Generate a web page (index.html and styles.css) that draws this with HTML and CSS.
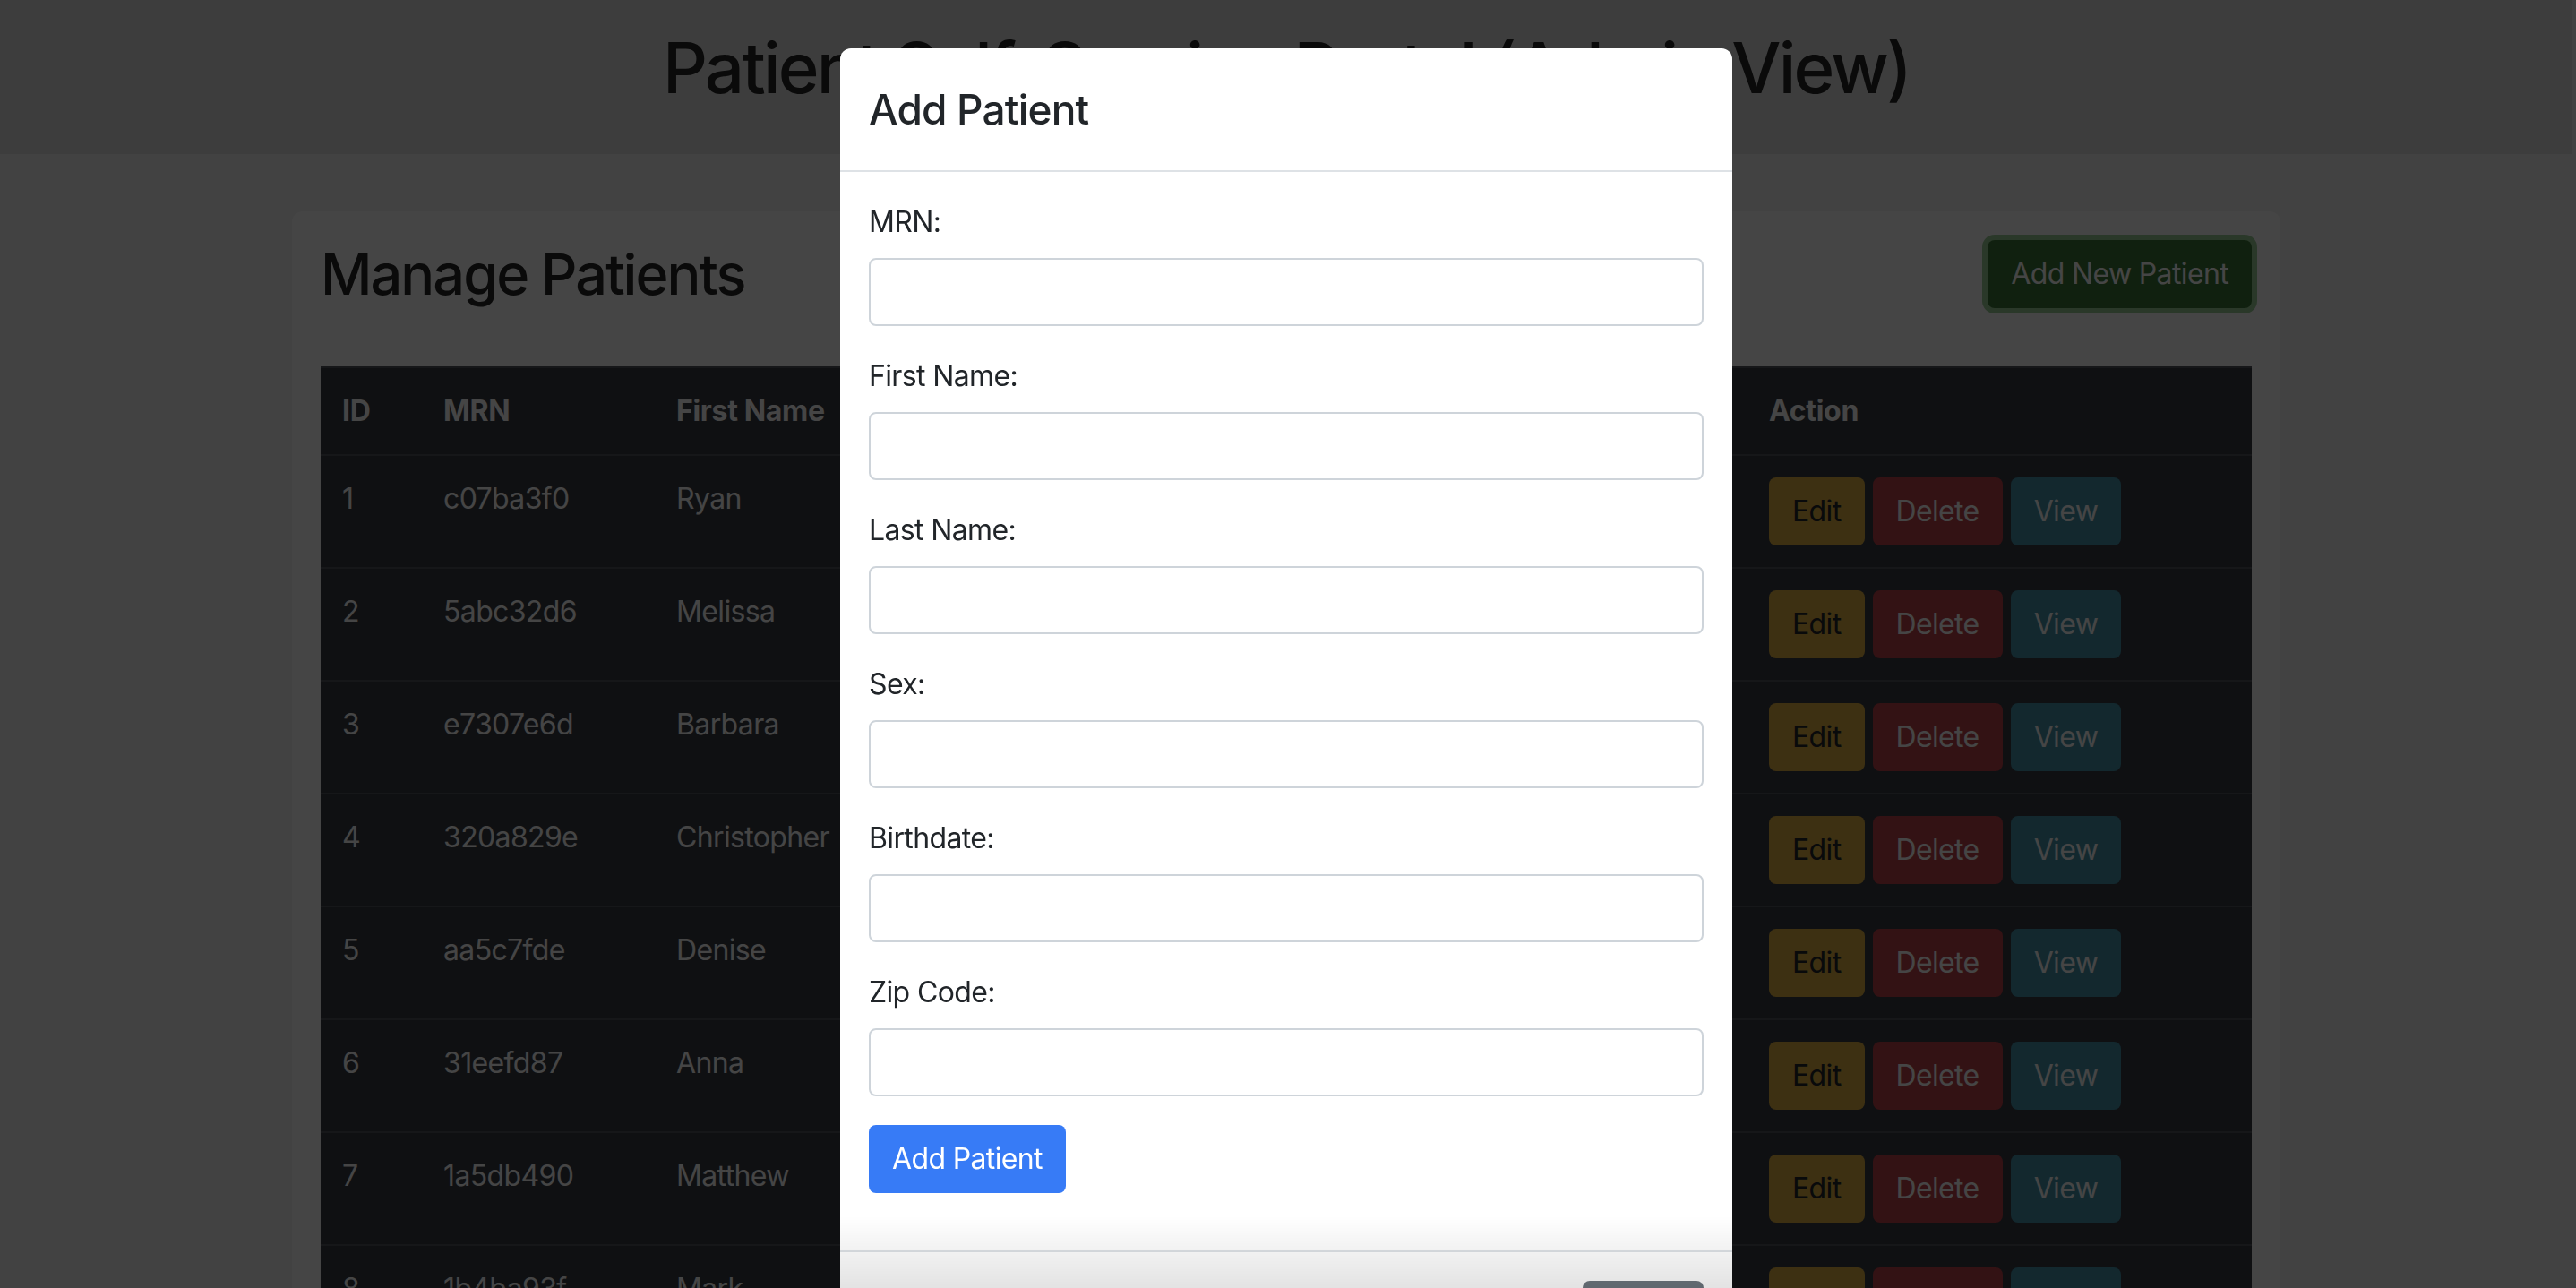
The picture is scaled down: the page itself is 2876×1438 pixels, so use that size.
FILE: index.html
```html
<!DOCTYPE html>
<html lang="en">
<head>
<meta charset="utf-8">
<title>Patient Self-Service Portal (Admin View)</title>
<link rel="stylesheet" href="styles.css">
</head>
<body>
<header class="page-header">
  <h1 class="page-title">Patient Self-Service Portal (Admin View)</h1>
</header>
<main class="container">
  <section class="card">
    <div class="card-head">
      <h2 class="card-title">Manage Patients</h2>
      <button class="btn btn-success" type="button">Add New Patient</button>
    </div>
    <table class="table">
      <colgroup>
        <col class="c-id"><col class="c-mrn"><col class="c-first"><col class="c-last"><col class="c-sex"><col class="c-birth"><col class="c-zip"><col class="c-action">
      </colgroup>
      <thead>
        <tr><th>ID</th><th>MRN</th><th>First Name</th><th>Last Name</th><th>Sex</th><th>Birthdate</th><th>Zip Code</th><th>Action</th></tr>
      </thead>
      <tbody>
        <tr><td>1</td><td>c07ba3f0</td><td>Ryan</td><td>Garcia</td><td>M</td><td>1985-03-12</td><td>02139</td><td><div class="actions"><button class="btn btn-warning">Edit</button><button class="btn btn-danger">Delete</button><button class="btn btn-info">View</button></div></td></tr>
        <tr><td>2</td><td>5abc32d6</td><td>Melissa</td><td>Johnson</td><td>F</td><td>1990-07-24</td><td>10001</td><td><div class="actions"><button class="btn btn-warning">Edit</button><button class="btn btn-danger">Delete</button><button class="btn btn-info">View</button></div></td></tr>
        <tr><td>3</td><td>e7307e6d</td><td>Barbara</td><td>Miller</td><td>F</td><td>1972-11-02</td><td>60614</td><td><div class="actions"><button class="btn btn-warning">Edit</button><button class="btn btn-danger">Delete</button><button class="btn btn-info">View</button></div></td></tr>
        <tr><td>4</td><td>320a829e</td><td>Christopher</td><td>Davis</td><td>M</td><td>1968-05-30</td><td>94110</td><td><div class="actions"><button class="btn btn-warning">Edit</button><button class="btn btn-danger">Delete</button><button class="btn btn-info">View</button></div></td></tr>
        <tr><td>5</td><td>aa5c7fde</td><td>Denise</td><td>Wilson</td><td>F</td><td>1983-09-15</td><td>30301</td><td><div class="actions"><button class="btn btn-warning">Edit</button><button class="btn btn-danger">Delete</button><button class="btn btn-info">View</button></div></td></tr>
        <tr><td>6</td><td>31eefd87</td><td>Anna</td><td>Moore</td><td>F</td><td>1995-01-08</td><td>73301</td><td><div class="actions"><button class="btn btn-warning">Edit</button><button class="btn btn-danger">Delete</button><button class="btn btn-info">View</button></div></td></tr>
        <tr><td>7</td><td>1a5db490</td><td>Matthew</td><td>Taylor</td><td>M</td><td>1979-12-19</td><td>98101</td><td><div class="actions"><button class="btn btn-warning">Edit</button><button class="btn btn-danger">Delete</button><button class="btn btn-info">View</button></div></td></tr>
        <tr><td>8</td><td>1b4ba93f</td><td>Mark</td><td>Anderson</td><td>M</td><td>1988-04-03</td><td>85001</td><td><div class="actions"><button class="btn btn-warning">Edit</button><button class="btn btn-danger">Delete</button><button class="btn btn-info">View</button></div></td></tr>
        <tr><td>9</td><td>7c2e91ab</td><td>Laura</td><td>Thomas</td><td>F</td><td>1992-08-27</td><td>19103</td><td><div class="actions"><button class="btn btn-warning">Edit</button><button class="btn btn-danger">Delete</button><button class="btn btn-info">View</button></div></td></tr>
      </tbody>
    </table>
  </section>
</main>

<div class="backdrop"></div>

<div class="modal">
  <div class="modal-dialog">
    <div class="modal-content">
      <div class="modal-header">
        <h4 class="modal-title">Add Patient</h4>
      </div>
      <div class="modal-body">
        <form class="patient-form">
          <div class="form-group">
            <label class="form-label" for="mrn">MRN:</label>
            <input class="form-control" id="mrn" type="text">
          </div>
          <div class="form-group">
            <label class="form-label" for="first">First Name:</label>
            <input class="form-control" id="first" type="text">
          </div>
          <div class="form-group">
            <label class="form-label" for="last">Last Name:</label>
            <input class="form-control" id="last" type="text">
          </div>
          <div class="form-group">
            <label class="form-label" for="sex">Sex:</label>
            <input class="form-control" id="sex" type="text">
          </div>
          <div class="form-group">
            <label class="form-label" for="birth">Birthdate:</label>
            <input class="form-control" id="birth" type="text">
          </div>
          <div class="form-group">
            <label class="form-label" for="zip">Zip Code:</label>
            <input class="form-control" id="zip" type="text">
          </div>
          <button class="btn btn-primary" type="submit">Add Patient</button>
        </form>
      </div>
      <div class="modal-footer">
        <button class="btn btn-secondary" type="button">Close</button>
      </div>
    </div>
  </div>
</div>
<div class="bottom-fade"></div>
</body>
</html>
```

FILE: styles.css
```css
* { box-sizing: border-box; }

html, body {
  height: 100%;
}

html { background: #f4f4f4; }

body {
  margin: 0 4px 0 0;
  font-family: Inter, "Noto Sans", sans-serif;
  font-size: 32px;
  line-height: 48px;
  letter-spacing: -0.02em;
  color: #212529;
  background: #f4f4f4;
  overflow: hidden;
}

.page-header {
  height: 172px;
  padding-top: 28px;
  background: #e2e2e2;
  text-align: center;
}

.page-title {
  margin: 0;
  font-size: 78px;
  line-height: 96px;
  font-weight: 500;
  letter-spacing: -0.036em;
  color: #262626;
}

.container {
  width: 2220px;
  margin: 64px auto 0;
}

.card {
  background: #ffffff;
  border-radius: 12px;
  padding: 32px;
}

.card-head {
  display: flex;
  justify-content: space-between;
  align-items: center;
  margin-bottom: 65px;
}

.card-title {
  margin: 0;
  font-size: 63px;
  line-height: 76px;
  font-weight: 500;
  letter-spacing: -0.031em;
  color: #262626;
}

.btn {
  display: inline-block;
  font-family: inherit;
  font-size: 32px;
  line-height: 48px;
  font-weight: 400;
  letter-spacing: -0.02em;
  padding: 12px 24px;
  border: 2px solid transparent;
  border-radius: 8px;
  cursor: pointer;
}

.btn-success {
  background: #3b7738;
  color: #ffffff;
  box-shadow: 0 0 0 6px #9ccf98;
}

.btn-warning { background: #e2b243; color: #212529; }
.btn-danger { background: #bd434a; color: #ffffff; }
.btn-info { background: #4694aa; color: #ffffff; }
.btn-primary { background: #377bf6; color: #ffffff; }
.btn-secondary { background: #6c757d; color: #ffffff; }

.table {
  width: 100%;
  border-collapse: collapse;
  table-layout: fixed;
  background: #383b43;
  color: #ffffff;
}

.c-id { width: 113px; }
.c-mrn { width: 260px; }
.c-first { width: 269px; }
.c-last { width: 260px; }
.c-sex { width: 160px; }
.c-birth { width: 280px; }
.c-zip { width: 251px; }
.c-action { width: 563px; }

.table th,
.table td {
  padding: 24px;
  border-top: 2px solid #52565d;
  text-align: left;
  vertical-align: top;
  white-space: nowrap;
}

.table th {
  font-weight: 700;
  letter-spacing: -0.01em;
}

.actions {
  display: flex;
  gap: 9px;
}

.backdrop {
  position: fixed;
  inset: 0;
  background: rgba(0, 0, 0, 0.73);
}

.modal {
  position: fixed;
  top: 0;
  bottom: 0;
  left: 0;
  right: 4px;
  display: flex;
  justify-content: center;
  align-items: flex-start;
}

.modal-dialog {
  width: 996px;
  margin-top: 54px;
}

.modal-content {
  background: #ffffff;
  border-radius: 12px;
  overflow: hidden;
}

.modal-header {
  padding: 32px;
  border-bottom: 2px solid #dee2e6;
}

.modal-title {
  margin: 0;
  font-size: 46px;
  line-height: 72px;
  font-weight: 500;
  letter-spacing: -0.018em;
  color: #212529;
}

.modal-body { padding: 32px; }

.patient-form { margin-bottom: 32px; }

.form-group { margin-bottom: 32px; }

.form-label {
  display: block;
  margin-bottom: 16px;
}

.form-control {
  display: block;
  width: 100%;
  height: 76px;
  padding: 12px 24px;
  border: 2px solid #ced4da;
  border-radius: 8px;
  font: inherit;
  color: #495057;
  background: #ffffff;
}

.modal-footer {
  display: flex;
  justify-content: flex-end;
  padding: 24px;
  border-top: 2px solid #dee2e6;
}

.modal-footer .btn { margin: 8px; }

.bottom-fade {
  position: fixed;
  bottom: 0;
  left: 50%;
  width: 996px;
  margin-left: -500px;
  height: 80px;
  background: linear-gradient(rgba(0, 0, 0, 0), rgba(0, 0, 0, 0.11));
  pointer-events: none;
}
```
